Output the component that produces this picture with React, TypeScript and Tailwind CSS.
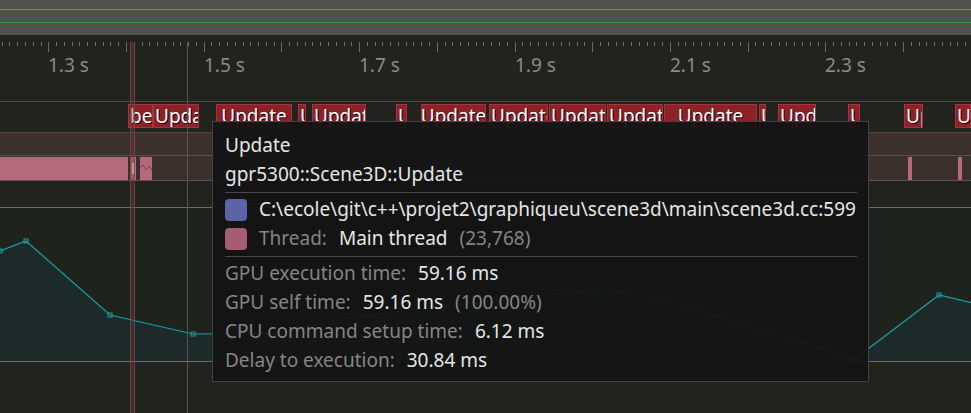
import React from "react";

type Zone = { x: number; w: number; label: string; center?: boolean };

const zones: Zone[] = [
  { x: 128, w: 25, label: "beginFrame" },
  { x: 153, w: 46, label: "Update" },
  { x: 216, w: 76, label: "Update", center: true },
  { x: 298, w: 8, label: "Update" },
  { x: 312, w: 54, label: "Update" },
  { x: 396, w: 11, label: "Update" },
  { x: 421, w: 65, label: "Update", center: true },
  { x: 489, w: 59, label: "Update" },
  { x: 549, w: 57, label: "Update" },
  { x: 607, w: 56, label: "Update" },
  { x: 664, w: 93, label: "Update", center: true },
  { x: 759, w: 7, label: "Update" },
  { x: 778, w: 38, label: "Update" },
  { x: 848, w: 12, label: "Update" },
  { x: 904, w: 19, label: "Update" },
  { x: 955, w: 16, label: "Update" },
];

const labels = [
  { x: 48, t: "1.3 s" },
  { x: 204, t: "1.5 s" },
  { x: 359, t: "1.7 s" },
  { x: 515, t: "1.9 s" },
  { x: 670, t: "2.1 s" },
  { x: 825, t: "2.3 s" },
];

// plot samples, y in page pixels
const points: [number, number][] = [
  [-10, 255], [0, 250], [26, 240], [110, 314], [193, 333], [276, 332],
  [358, 315], [441, 306], [524, 297], [607, 287], [691, 306], [773, 332],
  [856, 357], [939, 294], [985, 305],
];

const Ruler = () => {
  const ticks = [];
  for (let i = -6; i < 120; i++) {
    const x = 48.3 + i * 7.77;
    if (x < 0 || x > 971) continue;
    const major = ((i % 10) + 10) % 10 === 0;
    ticks.push(
      <line key={i} x1={Math.round(x) + 0.5} x2={Math.round(x) + 0.5} y1={7} y2={major ? 17 : 11} stroke="#6b6b66" strokeWidth={1} />
    );
  }
  return (
    <div className="relative h-[66px]">
      <svg width={971} height={66} className="absolute inset-0">{ticks}</svg>
      {labels.map((l) => (
        <span key={l.t} className="absolute top-[18px] text-[19px] leading-[24px] text-[#8a8a85]" style={{ left: l.x }}>
          {l.t}
        </span>
      ))}
    </div>
  );
};

const ZoneRow = () => (
  <div className="relative h-[30px]">
    {zones.map((z, i) => (
      <div
        key={i}
        className={`absolute top-[2px] h-[24px] overflow-hidden bg-[#8d2128] border border-[#a3343b] flex items-center text-[19px] leading-[24px] text-white whitespace-nowrap [text-shadow:1px_1px_0_rgba(0,0,0,0.85)] ${
          z.center ? "justify-center" : "pl-[1px]"
        }`}
        style={{ left: z.x, width: z.w }}
      >
        {z.label}
      </div>
    ))}
  </div>
);

const Chart = () => {
  const pts = points.map(([x, y]) => `${x},${y - 207}`).join(" ");
  const fill = `${pts} 985,153 -10,153`;
  return (
    <svg width={971} height={153} className="block">
      <polygon points={fill} fill="#1c2b29" />
      <polyline points={pts} fill="none" stroke="#1d9ea3" strokeWidth={1.2} />
      {points.map(([x, y], i) => (
        <rect key={i} x={x - 2} y={y - 207 - 2} width={4} height={4} fill="none" stroke="#1d9ea3" strokeWidth={1} />
      ))}
    </svg>
  );
};

const Swatch = ({ color }: { color: string }) => (
  <div className={`w-[22px] h-[22px] rounded-[4px] shrink-0 ${color}`} />
);

const Tooltip = () => (
  <div className="absolute left-[212px] top-[121px] w-[657px] h-[261px] bg-[#141414]/95 border border-[#404047] pl-[12px] pt-[9px] text-[19px] leading-[29px] text-[#e6e6e6]">
    <div className="w-[632px]">
      <div className="h-[29px]">Update</div>
      <div className="h-[29px]">gpr5300::Scene3D::Update</div>
      <div className="mt-[3px] h-px bg-[#47474e]" />
      <div className="mt-[2px] h-[29px] flex items-center gap-[12px]">
        <Swatch color="bg-[#5c63a6]" />
        <span className="whitespace-nowrap">C:\ecole\git\c++\projet2\graphiqueu\scene3d\main\scene3d.cc:599</span>
      </div>
      <div className="h-[29px] flex items-center gap-[12px]">
        <Swatch color="bg-[#a65d71]" />
        <span className="text-[#858585]">Thread:</span>
        <span>Main thread</span>
        <span className="text-[#858585]">(23,768)</span>
      </div>
      <div className="mt-[3px] h-px bg-[#47474e]" />
      <div className="mt-[2px] h-[29px] flex gap-[12px]">
        <span className="text-[#858585]">GPU execution time:</span>
        <span>59.16 ms</span>
      </div>
      <div className="h-[29px] flex gap-[12px]">
        <span className="text-[#858585]">GPU self time:</span>
        <span>59.16 ms</span>
        <span className="text-[#858585]">(100.00%)</span>
      </div>
      <div className="h-[29px] flex gap-[12px]">
        <span className="text-[#858585]">CPU command setup time:</span>
        <span>6.12 ms</span>
      </div>
      <div className="h-[29px] flex gap-[12px]">
        <span className="text-[#858585]">Delay to execution:</span>
        <span>30.84 ms</span>
      </div>
    </div>
  </div>
);

export default function App() {
  return (
    <div className="relative w-[971px] h-[413px] overflow-hidden bg-[#22231e] font-['Noto_Sans',sans-serif]">
      <div className="h-[35px] bg-[#4f534b] pt-[9px]">
        <div className="h-px bg-[#8a8650]" />
        <div className="mt-[12px] h-px bg-[#3d8f3b]" />
      </div>
      <Ruler />
      <div className="h-px bg-[#4a4a45]" />
      <ZoneRow />
      <div className="h-px bg-[#56463f]" />
      <div className="h-[22px] bg-[#3b302c]" />
      <div className="h-px bg-[#5e4f49]" />
      <div className="relative h-[24px] bg-[#3b302c]">
        <div className="absolute left-0 top-[1px] w-[128px] h-[23px] bg-[#b5697a]" />
        <div className="absolute left-[130px] top-[1px] w-[6px] h-[23px] bg-[#b86d7d] text-white text-[15px] leading-[23px] pl-[1px]">l</div>
        <div className="absolute left-[140px] top-[1px] w-[12px] h-[23px] bg-[#b5697a]">
          <svg width={12} height={23}>
            <polyline points="0,11 3,8 6,13 9,9 12,13" fill="none" stroke="#7a3f4b" strokeWidth={1} />
          </svg>
        </div>
        <div className="absolute left-[908px] top-[1px] w-[4px] h-[23px] bg-[#b5697a]" />
        <div className="absolute left-[958px] top-[1px] w-[4px] h-[23px] bg-[#b5697a]" />
      </div>
      <div className="h-px bg-[#5e4f49]" />
      <div className="h-[26px]" />
      <div className="h-px bg-[#77742a]" />
      <div className="bg-[#1f231e]">
        <Chart />
      </div>
      <div className="h-px bg-[#77742a]" />

      <div className="absolute left-[187px] top-[42px] bottom-0 w-px bg-[#56564f]" />
      <div className="absolute left-[130px] top-[42px] bottom-0 w-[5px] bg-[#6e3a36]/40 border-x border-[#7a4c47]/70" />

      <Tooltip />
    </div>
  );
}
